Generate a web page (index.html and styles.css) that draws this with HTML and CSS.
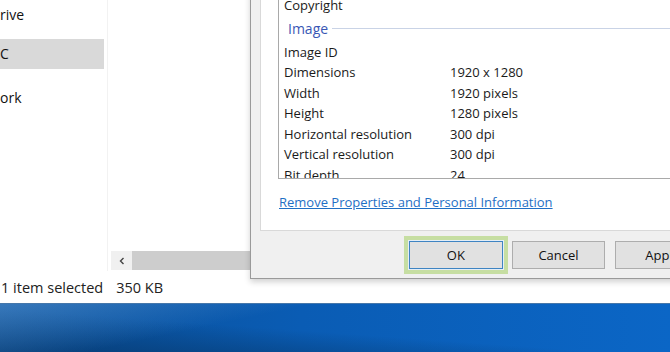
FILE: index.html
```html
<!DOCTYPE html>
<html>
<head>
<meta charset="utf-8">
<title>Properties</title>
<link rel="stylesheet" href="styles.css">
</head>
<body>

<div class="screen">
	<div class="explorer">
		<div class="explorer_main">
			<ul class="nav">
				<li class="nav_item">rive</li>
				<li class="nav_item nav_item_sel">C</li>
				<li class="nav_item nav_item_last">ork</li>
			</ul>
			<div class="files">
				<div class="files_body"></div>
				<div class="hscroll">
					<span class="hscroll_btn">
						<svg width="8" height="8" viewBox="0 0 8 8"><polyline points="5.5,1 2.5,4 5.5,7" fill="none" stroke="#444" stroke-width="1.4"/></svg>
					</span>
					<span class="hscroll_thumb"></span>
				</div>
			</div>
		</div>
		<div class="status">
			<span>1 item selected</span>
			<span class="status_size">350 KB</span>
		</div>
	</div>

	<div class="desktop"></div>

	<!-- properties dialog -->
	<div class="dialog">
		<div class="tab_page">
			<div class="props">
				<div class="prop_row"><span class="prop_name">Copyright</span><span class="prop_val"></span></div>
				<div class="prop_head"><span>Image</span></div>
				<div class="prop_row"><span class="prop_name">Image ID</span><span class="prop_val"></span></div>
				<div class="prop_row"><span class="prop_name">Dimensions</span><span class="prop_val">1920 x 1280</span></div>
				<div class="prop_row"><span class="prop_name">Width</span><span class="prop_val">1920 pixels</span></div>
				<div class="prop_row"><span class="prop_name">Height</span><span class="prop_val">1280 pixels</span></div>
				<div class="prop_row"><span class="prop_name">Horizontal resolution</span><span class="prop_val">300 dpi</span></div>
				<div class="prop_row"><span class="prop_name">Vertical resolution</span><span class="prop_val">300 dpi</span></div>
				<div class="prop_row"><span class="prop_name">Bit depth</span><span class="prop_val">24</span></div>
			</div>
			<a class="remove_link" href="#">Remove Properties and Personal Information</a>
		</div>
		<div class="buttons">
			<button class="btn btn_default">OK</button>
			<button class="btn">Cancel</button>
			<button class="btn">Apply</button>
		</div>
	</div>
</div>

</body>
</html>
```
FILE: styles.css
```css
*{ margin:0; padding:0; box-sizing:border-box;}
html,body{ width:670px; height:352px; overflow:hidden; background:#fff;}
body{
	font-family:"Open Sans","Noto Sans","DejaVu Sans",sans-serif;
	font-size:13px;
	color:#1a1a1a;
}
.screen{
	position:relative;
	width:670px;
	height:352px;
	display:flex;
	flex-direction:column;
	overflow:hidden;
}

/* explorer window */
.explorer{
	height:303px;
	display:flex;
	flex-direction:column;
	background:#fff;
}
.explorer_main{
	flex:1;
	display:flex;
}
.nav{
	list-style:none;
	width:108px;
	border-right:1px solid #f2f2f2;
	font-size:14px;
}
.nav_item{
	height:30px;
	line-height:30px;
	width:104px;
	margin-bottom:9px;
	color:#111;
}
.nav_item_sel{
	background:#d9d9d9;
	margin-bottom:14px;
}
.files{
	flex:1;
	display:flex;
	flex-direction:column;
	padding-left:3px;
}
.files_body{ flex:1;}
.hscroll{
	height:19px;
	display:flex;
	margin-bottom:1px;
}
.hscroll_btn{
	width:21px;
	background:#f0f0f0;
	display:flex;
	align-items:center;
	justify-content:center;
}
.hscroll_thumb{
	flex:1;
	background:#cdcdcd;
}
.status{
	height:32px;
	display:flex;
	align-items:center;
	gap:13px;
	padding-left:1px;
	font-size:14.5px;
	color:#222;
}

/* desktop strip */
.desktop{
	flex:1;
	border-top:1px solid #4677aa;
	background:
		linear-gradient(168deg, rgba(110,170,230,0.45) 0%, rgba(110,170,230,0) 35%),
		linear-gradient(to top right, #073f7a 0%, rgba(7,63,122,0) 45%),
		linear-gradient(90deg, #0b4f96 0%, #0a5cb4 45%, #0b66c6 100%);
}

/* properties dialog */
.dialog{
	position:absolute;
	left:250px;
	top:-50px;
	width:460px;
	border:1px solid #9a9a9a;
	background:#f0f0f0;
	box-shadow:0 3px 6px rgba(0,0,0,0.18);
	padding-left:9px;
}
.tab_page{
	background:#fff;
	border:1px solid #d9d9d9;
	padding:18px 0 19px 17px;
}
.props{
	height:209px;
	border:1px solid #a9a9a9;
	border-right:0;
	padding:23.75px 0 0 5px;
	overflow:hidden;
}
.prop_row{
	display:flex;
	height:20.5px;
	line-height:20.5px;
	white-space:nowrap;
}
.prop_name{ width:166px;}
.prop_head{
	height:26.5px;
	display:flex;
	align-items:center;
	gap:4px;
	padding-left:4px;
	color:#3a57b5;
	font-size:14px;
}
.prop_head:after{
	content:"";
	flex:1;
	height:1px;
	margin-right:10px;
	background:#c9d3e6;
}
.remove_link{
	display:inline-block;
	margin-top:14px;
	margin-left:1px;
	line-height:18px;
	color:#1f6fc5;
	text-decoration:underline;
	font-size:13px;
}
.buttons{
	display:flex;
	gap:10px;
	padding:10px 0 9px 149px;
}
.btn{
	width:96px;
	height:28px;
	border:1px solid #adadad;
	background:#e1e1e1;
	font-family:inherit;
	font-size:13px;
	color:#111;
}
.btn_default{
	border-color:#3f84c2;
	box-shadow:0 0 0 1px #e3eef8, 0 0 0 5px #c6dea2;
	margin-right:-1px;
}
```
